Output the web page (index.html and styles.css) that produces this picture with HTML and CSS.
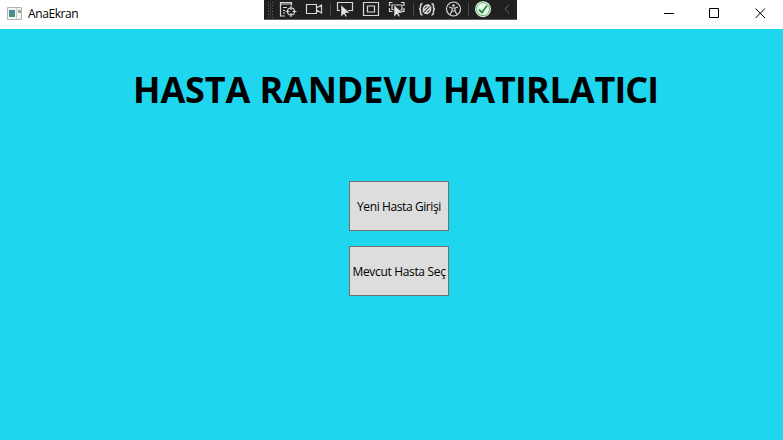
FILE: index.html
```html
<!DOCTYPE html>
<html lang="tr">
<head>
<meta charset="utf-8">
<title>AnaEkran</title>
<link rel="stylesheet" href="styles.css">
</head>
<body>
<header class="titlebar">
  <svg class="app-icon" width="16" height="14" viewBox="0 0 16 14">
    <defs><linearGradient id="g" x2="1" y2="1"><stop stop-color="#4a80ae"/><stop offset="1" stop-color="#4c9d6c"/></linearGradient></defs>
    <path fill="#f4f4f4" stroke="#b4b4b4" d="M.5.5h14v12H.5z"/>
    <path fill="url(#g)" d="M2 3h6v7H2z"/>
    <path stroke="#8bb39a" stroke-width="3" d="M11 4.500h3"/><path stroke="#ccc" d="M9.500 1v11"/>
  </svg>
  <span class="caption">AnaEkran</span>
  <nav class="window-controls">
    <svg width="46" height="28" viewBox="0 0 46 28"><path d="M18 13.500h10"/></svg>
    <svg width="46" height="28" viewBox="0 0 46 28"><path d="M17.500 8.500h9v9h-9z"/></svg>
    <svg width="46" height="28" viewBox="0 0 46 28"><path d="M17.500 8.500l9.500 9.500M27 8.500l-9.500 9.500"/></svg>
  </nav>
</header>
<div class="debug-bar">
  <svg width="253" height="20" viewBox="0 0 253 20">
    <g stroke="#656565" stroke-dasharray="1 2"><path d="M4.500 2v16M8.500 2v16"/><path d="M6.500 3.500v14"/></g>
    <g stroke="#484848"><path d="M66.500 3v13M149.500 3v13M204.500 3v13"/></g>
    <g fill="none" stroke="#d8d8d8" stroke-width="1.200">
      <path d="M21 16h-4.500V2.500h11v3M16.500 4h11M19 7.500h4M19 10.500h2M19 13h2"/>
      <circle cx="27" cy="11.500" r="3.500"/><path d="M27 6v4M27 13v4M21.500 11.500h4M28.500 11.500h4"/>
      <path d="M42.500 4.500h10v9h-10zM52.500 8l5-3v8l-5-3"/>
      <path d="M76 10.500h-2.500v-8h15v8H84"/>
      <path d="M99.500 2.500h15v13h-15zM103.500 6h7v6h-7z"/>
      <path d="M125.500 6V2.500h3M137 2.500h3V6M125.500 8v3.500h3M137 11.500h3V8M130 9.500h-2V5h10v5h-2"/>
      <path stroke-width="1.500" d="M158.500 3.500q-2 0-2 3v1q0 1.500-1.500 1.500q1.500 0 1.500 2v1q0 3 2 3M167.500 3.500q2 0 2 3v1q0 1.500 1.500 1.500q-1.500 0-1.500 2v1q0 3-2 3"/>
      <path stroke-width="1.600" d="M166 6a4 4 0 0 0-6.500 3v2l3-3 3.500-3M160 12.500a4 4 0 0 0 6.500-3v-2l-6 6"/>
      <circle cx="189.500" cy="9" r="7"/>
      <path d="M185 7l3 1h3l3-1M188 8v3l-2 3.500M191 8v3l2 3.500M188 11h3"/>
    </g>
    <g fill="#e2e2e2" stroke="#202020" stroke-width=".5"><path d="M77 5v12l3-3 1.500 3 1.500-1-1.500-3H86z"/><path d="M130 5v12l3-3 1.500 3 1.500-1-1.500-3H139z"/><circle cx="189.500" cy="5.500" r="1.500"/></g>
    <circle cx="219" cy="9.200" r="8" fill="#e4f0e4"/>
    <circle cx="219" cy="9.200" r="6.500" fill="#eaf6ea" stroke="#62b06c" stroke-width="1"/>
    <path d="M215 9.500l3 3 5-7" fill="none" stroke="#2d8f3d" stroke-width="1.800"/>
    <path d="M245 5l-4 4 4 4" fill="none" stroke="#666"/>
  </svg>
</div>
<main class="content">
  <h1 class="heading">HASTA RANDEVU HAT<span class="plain-i">I</span>RLAT<span class="plain-i">I</span>C<span class="plain-i">I</span></h1>
  <button class="action action-new">Yeni Hasta Girişi</button>
  <button class="action action-select">Mevcut Hasta Seç</button>
</main>
</body>
</html>
```
FILE: styles.css
```css
* { box-sizing: border-box; }
body {
  margin: 0;
  height: 440px;
  overflow: hidden;
  background: #1ed7ee;
  color: #000;
  font-family: "Open Sans", "Noto Sans", sans-serif;
}
.titlebar {
  display: flex;
  align-items: flex-start;
  height: 29px;
  background: #fff;
}
.app-icon { margin: 7px 0 0 7px; }
.caption {
  margin-left: 5px;
  font-size: 12px;
  line-height: 28px;
  letter-spacing: -0.400px;
}
.window-controls { display: flex; margin: 0 -1px 0 auto; }
.window-controls svg { fill: none; stroke: #000; stroke-width: 1; }
.debug-bar {
  position: absolute;
  top: 0;
  left: 264px;
  width: 253px;
  height: 20px;
  background: #202020;
  border-bottom: 1px solid #625d5a;
}
.debug-bar svg { display: block; }
.content {
  display: flex;
  flex-direction: column;
  align-items: flex-start;
}
.heading {
  height: 48px;
  margin: 37px 0 0 133px;
  font-size: 36px;
  line-height: 48px;
  font-weight: 700;
  letter-spacing: -0.140px;
  white-space: nowrap;
}
.plain-i { font-family: "Liberation Sans", sans-serif; font-size: 37px; line-height: 1; }
.action {
  width: 100px;
  height: 50px;
  margin-left: 349px;
  padding: 2px 0 0;
  border: 1px solid #707070;
  background: #ddd;
  color: #000;
  font: 12px/16px "Open Sans", "Noto Sans", sans-serif;
  letter-spacing: -0.400px;
  white-space: nowrap;
}
.action-new { margin-top: 67px; }
.action-select { margin-top: 15px; letter-spacing: -0.330px; }
```
